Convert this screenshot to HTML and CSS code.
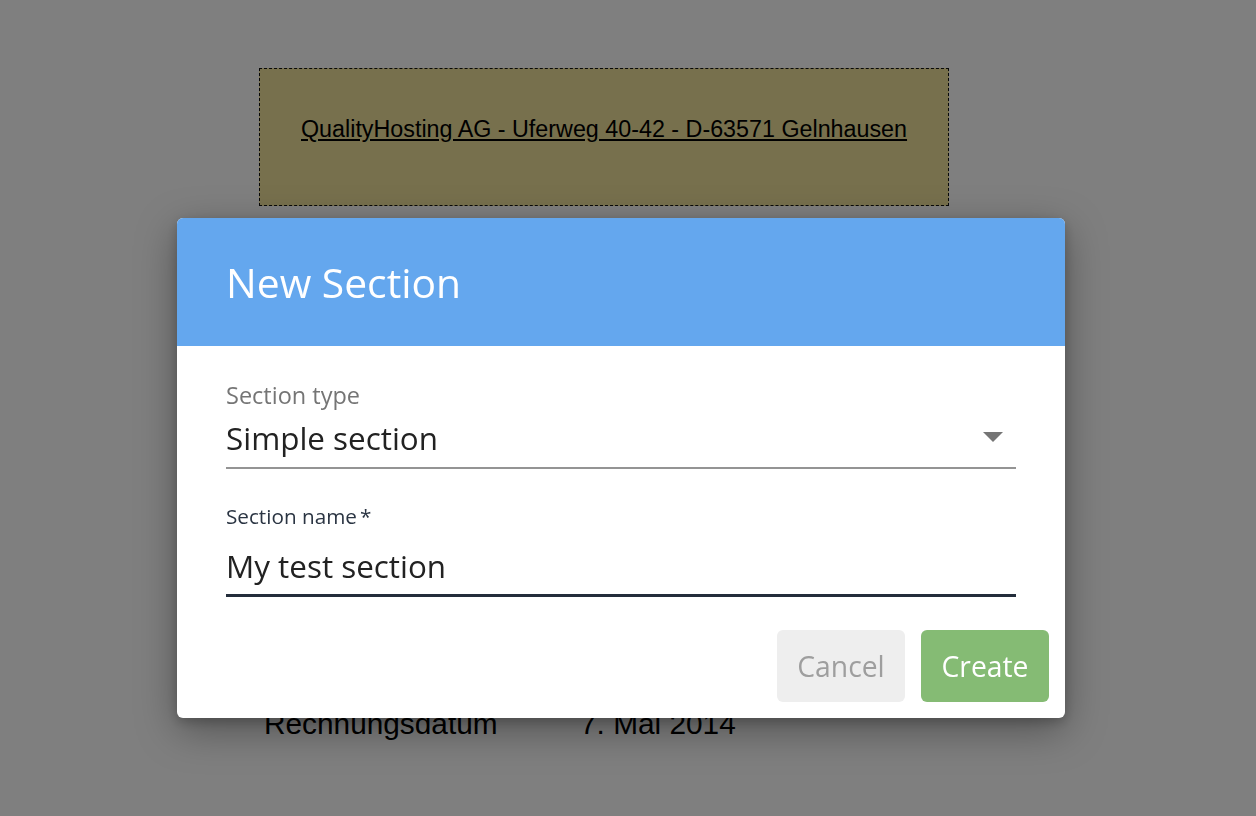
FILE: index.html
```html
<!DOCTYPE html>
<html>
<head>
<meta charset="utf-8">
<link rel="stylesheet" href="styles.css">
</head>
<body>
<div class="page">
  <div class="address-box">
    <a class="address" href="#">QualityHosting AG - Uferweg 40-42 - D-63571 Gelnhausen</a>
  </div>
  <div class="info-row">
    <span class="info-label">Rechnungsdatum</span>
    <span class="info-value">7. Mai 2014</span>
  </div>
</div>
<div class="overlay"></div>
<div class="dialog">
  <div class="dialog-header">
    <h1 class="dialog-title">New Section</h1>
  </div>
  <div class="dialog-body">
    <div class="field field-select">
      <div class="field-label">Section type</div>
      <div class="field-value">
        <span>Simple section</span>
        <svg class="caret" width="20" height="10" viewBox="0 0 20 10"><path d="M0 0 L20 0 L10 10 Z" fill="#757575"/></svg>
      </div>
    </div>
    <div class="field field-text">
      <div class="field-label dark">Section name<span class="req">*</span></div>
      <div class="field-value"><span>My test section</span></div>
    </div>
  </div>
  <div class="dialog-footer">
    <button class="btn btn-cancel">Cancel</button>
    <button class="btn btn-create">Create</button>
  </div>
</div>
</body>
</html>
```
FILE: styles.css
```css
html, body {
  margin: 0;
  padding: 0;
  background: #ffffff;
  width: 1256px;
  height: 816px;
  overflow: hidden;
}
.page {
  padding: 68px 0 0 259px;
  font-family: "Liberation Sans", Arial, sans-serif;
  color: #000;
}
.address-box {
  width: 688px;
  height: 136px;
  border: 1px dashed #111;
  background: #eee09a;
  box-sizing: content-box;
  display: flex;
  align-items: flex-start;
}
.address {
  display: block;
  margin: 46px 0 0 41px;
  font-size: 23.3px;
  line-height: 28px;
  color: #000;
  text-decoration: underline;
}
.info-row {
  display: flex;
  margin: 502px 0 0 5px;
  font-size: 29.8px;
  line-height: 32px;
}
.info-label { width: 316px; }
.overlay {
  position: fixed;
  inset: 0;
  background: rgba(0, 0, 0, 0.5);
}
.dialog {
  position: absolute;
  left: 177px;
  top: 218px;
  width: 888px;
  background: #fff;
  border-radius: 6px;
  overflow: hidden;
  box-shadow: 0 12px 40px rgba(0,0,0,0.35), 0 4px 12px rgba(0,0,0,0.2);
  font-family: "Open Sans", Lato, sans-serif;
}
.dialog-header {
  height: 128px;
  background: #64a7ee;
  display: flex;
  align-items: center;
  padding: 0 49px;
}
.dialog-title {
  margin: 0;
  font-weight: 400;
  font-size: 40.8px;
  color: #fff;
}
.dialog-body {
  padding: 36px 49px 0;
}
.field-label {
  font-size: 23.5px;
  line-height: 26px;
  color: #757575;
}
.field-label.dark {
  font-size: 20.7px;
  line-height: 24px;
  color: #2b3543;
}
.req { margin-left: 3px; }
.field-value {
  display: flex;
  align-items: center;
  justify-content: space-between;
  line-height: 40px;
  color: #222;
}
.field-select .field-value {
  margin-top: 10px;
  padding-bottom: 9px;
  border-bottom: 2px solid #949494;
  font-size: 31.4px;
}
.caret { margin-right: 13px; margin-top: -2px; }
.field-text { margin-top: 35px; }
.field-text .field-value {
  margin-top: 18px;
  padding-bottom: 8px;
  border-bottom: 3px solid #232d3b;
  font-size: 31.4px;
}
.dialog-footer {
  display: flex;
  justify-content: flex-end;
  gap: 16px;
  padding: 33px 16px 16px;
}
.btn {
  width: 128px;
  height: 72px;
  border: 0;
  border-radius: 6px;
  font-family: "Open Sans", Lato, sans-serif;
  font-size: 28.3px;
  padding: 0;
}
.btn-cancel { background: #eeeeee; color: #9e9e9e; }
.btn-create { background: #85bb74; color: #fff; }
```
